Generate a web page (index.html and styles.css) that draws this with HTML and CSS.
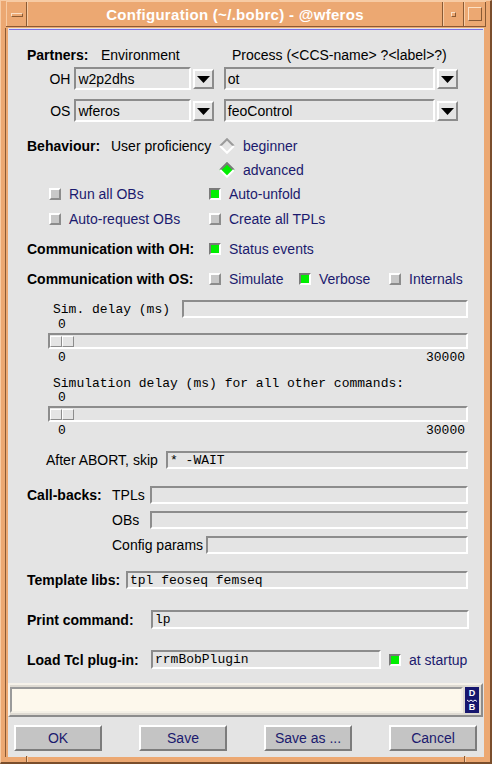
FILE: index.html
```html
<!DOCTYPE html>
<html lang="en">
<head>
<meta charset="utf-8">
<title>Configuration</title>
<link rel="stylesheet" href="styles.css">
</head>
<body>
<div class="window">
  <div class="titlebar">
    <div class="tb-seg tb-menu"><span class="menu-bar"></span></div>
    <div class="tb-seg tb-title">Configuration (~/.bobrc) - @wferos</div>
    <div class="tb-seg tb-min"><span class="min-dot"></span></div>
    <div class="tb-seg tb-max"><span class="max-box"></span></div>
  </div>
  <div class="content">
    <div class="rule"></div>

    <div class="row partners">
      <span class="bold w-partners">Partners:</span>
      <span class="w-env">Environment</span>
      <span>Process (&lt;CCS-name&gt; ?&lt;label&gt;?)</span>
    </div>
    <div class="row combo-row first">
      <span class="side">OH</span>
      <div class="field env">w2p2dhs</div>
      <div class="drop"><svg width="13" height="7" viewBox="0 0 13 7"><polygon points="0,0 13,0 6.5,7" fill="#000"/></svg></div>
      <div class="field proc">ot</div>
      <div class="drop"><svg width="13" height="7" viewBox="0 0 13 7"><polygon points="0,0 13,0 6.5,7" fill="#000"/></svg></div>
    </div>
    <div class="row combo-row second">
      <span class="side">OS</span>
      <div class="field env">wferos</div>
      <div class="drop"><svg width="13" height="7" viewBox="0 0 13 7"><polygon points="0,0 13,0 6.5,7" fill="#000"/></svg></div>
      <div class="field proc">feoControl</div>
      <div class="drop"><svg width="13" height="7" viewBox="0 0 13 7"><polygon points="0,0 13,0 6.5,7" fill="#000"/></svg></div>
    </div>

    <div class="row behave">
      <span class="bold w-behave">Behaviour:</span>
      <span class="w-prof">User proficiency</span>
      <svg class="diamond" width="16" height="16" viewBox="0 0 16 16"><polygon points="8,0.5 15.5,8 8,15.5 0.5,8" fill="#e4e4e4"/><polyline points="1.2,8 8,1.2 14.8,8" fill="none" stroke="#9a9a9a" stroke-width="2"/><polyline points="1.2,8 8,14.8 14.8,8" fill="none" stroke="#ffffff" stroke-width="2"/></svg>
      <span class="opt">beginner</span>
    </div>
    <div class="row adv">
      <svg class="diamond" width="16" height="16" viewBox="0 0 16 16"><polygon points="8,0.5 15.5,8 8,15.5 0.5,8" fill="#00ee00"/><polyline points="1.2,8 8,1.2 14.8,8" fill="none" stroke="#7a7a7a" stroke-width="2"/><polyline points="1.2,8 8,14.8 14.8,8" fill="none" stroke="#ffffff" stroke-width="2"/></svg>
      <span class="opt">advanced</span>
    </div>

    <div class="row cbrow r1">
      <div class="cbitem w-cb"><span class="cb"></span><span class="opt">Run all OBs</span></div>
      <div class="cbitem"><span class="cb on"></span><span class="opt">Auto-unfold</span></div>
    </div>
    <div class="row cbrow r2">
      <div class="cbitem w-cb"><span class="cb"></span><span class="opt">Auto-request OBs</span></div>
      <div class="cbitem"><span class="cb"></span><span class="opt">Create all TPLs</span></div>
    </div>

    <div class="row comm">
      <span class="bold w-comm">Communication with OH:</span>
      <div class="cbitem"><span class="cb on"></span><span class="opt">Status events</span></div>
    </div>
    <div class="row comm">
      <span class="bold w-comm">Communication with OS:</span>
      <div class="cbitem w-os"><span class="cb"></span><span class="opt">Simulate</span></div>
      <div class="cbitem w-os"><span class="cb on"></span><span class="opt">Verbose</span></div>
      <div class="cbitem"><span class="cb"></span><span class="opt">Internals</span></div>
    </div>

    <div class="row simdelay">
      <span class="mono w-sim">Sim. delay (ms)</span>
      <div class="field grow"></div>
    </div>
    <div class="row zero mono">0</div>
    <div class="row slider-row">
      <div class="trough"><div class="thumb"><span></span><span></span></div></div>
    </div>
    <div class="row scale-labels mono"><span>0</span><span>30000</span></div>

    <div class="row simall mono">Simulation delay (ms) for all other commands:</div>
    <div class="row zero second mono">0</div>
    <div class="row slider-row">
      <div class="trough"><div class="thumb"><span></span><span></span></div></div>
    </div>
    <div class="row scale-labels mono"><span>0</span><span>30000</span></div>

    <div class="row abort">
      <span class="w-abort">After ABORT, skip</span>
      <div class="field grow mono">* -WAIT</div>
    </div>

    <div class="row cb-tpl">
      <span class="bold w-callbacks">Call-backs:</span>
      <span class="w-sub">TPLs</span>
      <div class="field grow"></div>
    </div>
    <div class="row cb-sub">
      <span class="w-sub">OBs</span>
      <div class="field grow"></div>
    </div>
    <div class="row cb-sub">
      <span class="w-cfg">Config params</span>
      <div class="field grow"></div>
    </div>

    <div class="row tpllibs">
      <span class="bold w-tpl">Template libs:</span>
      <div class="field grow mono">tpl feoseq femseq</div>
    </div>
    <div class="row print">
      <span class="bold w-print">Print command:</span>
      <div class="field grow mono">lp</div>
    </div>
    <div class="row plugin">
      <span class="bold w-print">Load Tcl plug-in:</span>
      <div class="field plug mono">rrmBobPlugin</div>
      <div class="cbitem"><span class="cb on"></span><span class="opt">at startup</span></div>
    </div>

    <div class="status">
      <div class="status-field"></div>
      <div class="db"><span>D</span><svg width="10" height="3" viewBox="0 0 10 3"><polyline points="0,1 2,2.5 4,1 6,2.5 8,1 10,2.5" fill="none" stroke="#fff" stroke-width="1"/></svg><span>B</span></div>
    </div>

    <div class="buttons">
      <div class="btn">OK</div>
      <div class="btn">Save</div>
      <div class="btn">Save as ...</div>
      <div class="btn">Cancel</div>
    </div>
  </div>
</div>
</body>
</html>
```
FILE: styles.css
```css
* { box-sizing: border-box; }
html, body { margin: 0; padding: 0; }
body {
  width: 492px;
  height: 764px;
  overflow: hidden;
  background: #eca872;
  font-family: "Liberation Sans", Arial, sans-serif;
  font-size: 14px;
  color: #000;
}
.window {
  position: relative;
  width: 492px;
  height: 764px;
  background: #eca872;
  border-style: solid;
  border-width: 1px 2px 2px 1px;
  border-color: #f7cba4 #7a4e2c #7a4e2c #f7cba4;
  padding-bottom: 5px;
  display: flex;
  flex-direction: column;
}
/* frame resize-handle ticks in the bottom border */
.window::before,
.window::after {
  content: "";
  position: absolute;
  bottom: 0;
  width: 1px;
  height: 6px;
  background: #8a5a34;
  box-shadow: 1px 0 0 #f7cba4;
}
.window::before { left: 25px; }
.window::after { left: 463px; }

/* title bar */
.titlebar {
  height: 26px;
  margin: 0 4px 1px 5px;
  display: flex;
  border-top: 1px solid #f7cba4;
  border-bottom: 1px solid #8a5a34;
}
.tb-seg {
  border-left: 1px solid #f7cba4;
  border-right: 1px solid #8a5a34;
  display: flex;
  align-items: center;
  justify-content: center;
}
.tb-menu { width: 21px; }
.tb-title {
  flex: 1;
  color: #fff;
  font-weight: bold;
  font-size: 15px;
  letter-spacing: 0.3px;
  padding-top: 1px;
}
.tb-min { width: 21px; }
.tb-max { width: 22px; }
.menu-bar {
  width: 12px;
  height: 4px;
  border-style: solid;
  border-width: 1px;
  border-color: #fbe0c6 #8a5a34 #8a5a34 #fbe0c6;
  margin-top: 1px;
}
.min-dot {
  width: 5px;
  height: 5px;
  border-style: solid;
  border-width: 1px;
  border-color: #fbe0c6 #8a5a34 #8a5a34 #fbe0c6;
  margin-top: 1px;
}
.max-box {
  width: 14px;
  height: 14px;
  border-style: solid;
  border-width: 1px;
  border-color: #fbe0c6 #8a5a34 #8a5a34 #fbe0c6;
}

/* content */
.content {
  flex: 1;
  margin: 0 6px 0 7px;
  background: #e4e4e4;
  display: flex;
  flex-direction: column;
  box-shadow: -2px 0 0 #eca872, -3px 0 0 #8a5a34;
}
.rule {
  height: 1px;
  margin: 1px 1px 0 1px;
  background: #7b70e2;
}
.row {
  display: flex;
  align-items: center;
  padding-left: 19px;
  padding-right: 16px;
  white-space: nowrap;
  flex: none;
}
.bold { font-weight: bold; }
.mono { font-family: "Liberation Mono", "Courier New", monospace; font-size: 13px; }
.opt { color: #1b1a6e; }

.w-partners { width: 74px; }
.w-env { width: 131px; }
.w-behave { width: 84px; }
.w-prof { width: 108px; }
.w-comm { width: 182px; }
.w-cb { width: 160px; }
.w-os { width: 90px; }
.w-sim { width: 129px; }
.w-abort { width: 120px; }
.w-callbacks { width: 85px; }
.w-sub { width: 38px; }
.w-cfg { width: 94px; }
.w-tpl { width: 99px; }
.w-print { width: 124px; }

/* fields */
.field {
  height: 100%;
  border-style: solid;
  border-width: 2px;
  border-color: #8c8c8c #ffffff #ffffff #8c8c8c;
  background: #e4e4e4;
  padding: 0 2px;
  display: flex;
  align-items: center;
  overflow: hidden;
  white-space: pre;
}
.grow { flex: 1; }
.env { width: 118px; margin-right: 2px; }
.proc { width: 214px; margin-right: 2px; }
.plug { width: 230px; margin-right: 8px; }
.drop {
  width: 21px;
  height: 20px;
  border-style: solid;
  border-width: 2px;
  border-color: #ffffff #8c8c8c #8c8c8c #ffffff;
  display: flex;
  align-items: center;
  justify-content: center;
  padding-top: 2px;
  margin-right: 10px;
}
.side { width: 48px; text-align: right; padding-right: 4px; }

/* checkboxes / radios */
.cbitem { display: flex; align-items: center; gap: 8px; }
.cb {
  width: 12px;
  height: 12px;
  flex: none;
  border-style: solid;
  border-width: 2px;
  border-color: #ffffff #8c8c8c #8c8c8c #ffffff;
  background: #c8c8c8;
}
.cb.on {
  border-color: #7a7a7a #ffffff #ffffff #7a7a7a;
  background: #00ee00;
}
.diamond { flex: none; margin-right: 8px; }

/* rows */
.partners { height: 16px; margin-top: 17px; }
.combo-row { height: 23px; }
.combo-row.first { margin-top: 4px; }
.combo-row.second { margin-top: 9px; }
.behave { height: 17px; margin-top: 15px; }
.adv { height: 17px; margin-top: 7px; padding-left: 211px; }
.cbrow { height: 16px; padding-left: 41px; }
.cbrow.r1 { margin-top: 8px; }
.cbrow.r2 { margin-top: 9px; }
.comm { height: 16px; margin-top: 14px; }
.simdelay { height: 18px; margin-top: 13px; padding-left: 45px; }
.zero { height: 12px; padding-left: 50px; }
.zero.second { margin-top: 1px; }
.slider-row { height: 16px; margin-top: 3px; padding-left: 40px; }
.scale-labels { height: 12px; margin-top: 2px; padding-left: 50px; padding-right: 19px; justify-content: space-between; }
.simall { height: 14px; margin-top: 13px; padding-left: 45px; }
.abort { height: 18px; margin-top: 15px; padding-left: 38px; }
.cb-tpl { height: 18px; margin-top: 17px; }
.cb-sub { height: 18px; margin-top: 7px; padding-left: 104px; }
.tpllibs { height: 18px; margin-top: 17px; }
.print { height: 19px; margin-top: 21px; padding-right: 15px; }
.plugin { height: 19px; margin-top: 21px; }

/* slider */
.trough {
  width: 420px;
  height: 16px;
  border-style: solid;
  border-width: 2px;
  border-color: #8c8c8c #ffffff #ffffff #8c8c8c;
  background: #e4e4e4;
  padding-top: 1px;
}
.thumb { display: flex; }
.thumb span {
  width: 12px;
  height: 11px;
  border-style: solid;
  border-width: 1px;
  border-color: #ffffff #8c8c8c #8c8c8c #ffffff;
  background: #e4e4e4;
}

/* status bar */
.status {
  flex: none;
  height: 34px;
  margin: 14px 1px 0 0;
  border-style: solid;
  border-width: 2px;
  border-color: #f6f2ea #8c8c8c #8c8c8c #f6f2ea;
  background: #dedad2;
  padding: 0 2px 0 0;
  display: flex;
  align-items: center;
  gap: 2px;
}
.status-field {
  flex: 1;
  height: 26px;
  border-style: solid;
  border-width: 2px;
  border-color: #9a9a9a #f4f0e6 #f4f0e6 #9a9a9a;
  background: #fdf8ec;
}
.db {
  width: 14px;
  height: 26px;
  background: #16166e;
  color: #fff;
  font-weight: bold;
  font-size: 9px;
  line-height: 9px;
  display: flex;
  flex-direction: column;
  align-items: center;
  justify-content: center;
  gap: 1px;
}

/* buttons */
.buttons {
  flex: none;
  height: 26px;
  margin-top: 8px;
  padding: 0 7px 0 6px;
  display: flex;
  justify-content: space-between;
}
.btn {
  width: 88px;
  height: 26px;
  border-style: solid;
  border-width: 2px;
  border-color: #ffffff #7c7c7c #7c7c7c #ffffff;
  background: #c4c4c4;
  color: #1b1a6e;
  display: flex;
  align-items: center;
  justify-content: center;
}
```
